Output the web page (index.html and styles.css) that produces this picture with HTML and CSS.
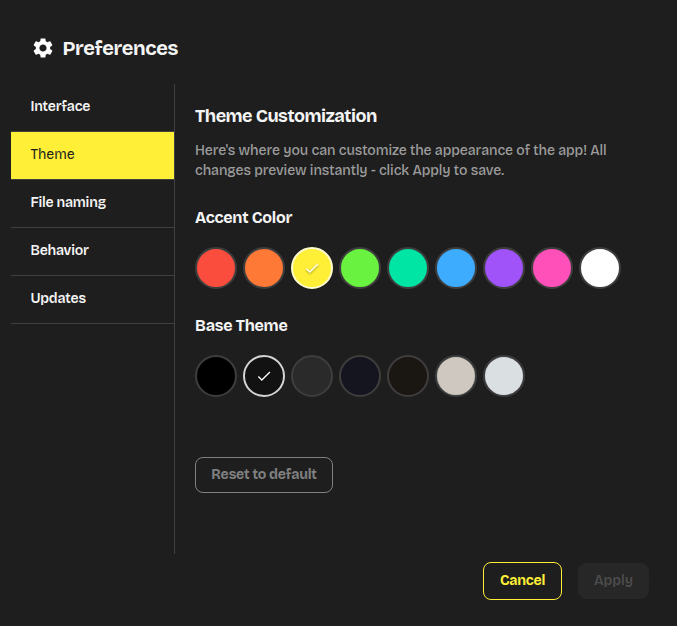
FILE: index.html
```html
<!DOCTYPE html>
<html lang="en">
<head>
<meta charset="utf-8">
<title>Preferences</title>
<link rel="stylesheet" href="styles.css">
</head>
<body>
<main class="dialog">
  <header class="header">
    <svg class="gear" viewBox="0 0 24 24"><path fill="currentColor" d="M19.14 12.94c.04-.3.06-.61.06-.94 0-.32-.02-.64-.07-.94l2.03-1.58c.18-.14.23-.41.12-.61l-1.92-3.32c-.12-.22-.37-.29-.59-.22l-2.39.96c-.5-.38-1.03-.7-1.62-.94l-.36-2.54c-.04-.24-.24-.41-.48-.41h-3.84c-.24 0-.43.17-.47.41l-.36 2.54c-.59.24-1.13.57-1.62.94l-2.39-.96c-.22-.08-.47 0-.59.22L2.74 8.87c-.12.21-.08.47.12.61l2.03 1.58c-.05.3-.09.63-.09.94s.02.64.07.94l-2.03 1.58c-.18.14-.23.41-.12.61l1.92 3.32c.12.22.37.29.59.22l2.39-.96c.5.38 1.03.7 1.62.94l.36 2.54c.05.24.24.41.48.41h3.84c.24 0 .44-.17.47-.41l.36-2.54c.59-.24 1.13-.56 1.62-.94l2.39.96c.22.08.47 0 .59-.22l1.92-3.32c.12-.22.07-.47-.12-.61l-2.01-1.58zM12 15.6c-1.98 0-3.6-1.62-3.6-3.6s1.62-3.6 3.6-3.6 3.6 1.62 3.6 3.6-1.62 3.6-3.6 3.6z"/></svg>
    <h1 class="title">Preferences</h1>
  </header>
  <div class="body">
    <nav class="nav">
      <a class="tab">Interface</a>
      <a class="tab active">Theme</a>
      <a class="tab">File naming</a>
      <a class="tab">Behavior</a>
      <a class="tab">Updates</a>
    </nav>
    <section class="panel">
      <h2 class="heading">Theme Customization</h2>
      <p class="intro">Here's where you can customize the appearance of the app! All<br>changes preview instantly - click Apply to save.</p>
      <h3 class="label accent-label">Accent Color</h3>
      <div class="swatches">
        <i class="swatch red"></i><i class="swatch orange"></i>
        <i class="swatch yellow"><svg class="check" viewBox="0 0 24 24"><path d="M4.5 12.8l4.6 4.5L20 6.8"/></svg></i>
        <i class="swatch green"></i><i class="swatch teal"></i><i class="swatch blue"></i><i class="swatch purple"></i><i class="swatch pink"></i><i class="swatch white"></i>
      </div>
      <h3 class="label base-label">Base Theme</h3>
      <div class="swatches">
        <i class="swatch black"></i>
        <i class="swatch dark"><svg class="check" viewBox="0 0 24 24"><path d="M4.5 12.8l4.6 4.5L20 6.8"/></svg></i>
        <i class="swatch gray"></i><i class="swatch navy"></i><i class="swatch brown"></i><i class="swatch sand"></i><i class="swatch silver"></i>
      </div>
      <button class="btn reset">Reset to default</button>
    </section>
  </div>
  <footer class="footer">
    <button class="btn cancel">Cancel</button>
    <button class="btn apply">Apply</button>
  </footer>
</main>
</body>
</html>
```
FILE: styles.css
```css
* { box-sizing: border-box; }
body {
  margin: 0;
  background: #1e1e1e;
  color: #f4f4f4;
  font-family: "Bricolage Grotesque", Inter, "Liberation Sans", sans-serif;
  font-size: 14px;
}
.dialog { height: 626px; overflow: hidden; display: flex; flex-direction: column; }
h1, h2, h3, p { margin: 0; white-space: nowrap; }
.header { display: flex; align-items: center; gap: 7.5px; height: 84px; padding: 12px 0 0 31px; }
.gear { width: 24px; height: 24px; color: #fff; }
.title { font-size: 20px; font-weight: 700; line-height: 24px; letter-spacing: -0.35px; }
.body { display: flex; height: 470px; padding-left: 11px; }
.nav { width: 164px; border-right: 1px solid #404040; }
.tab {
  display: flex; align-items: center; height: 48px; padding: 0 0 2px 19.4px;
  border-bottom: 1px solid #404040; font-weight: 600; letter-spacing: -0.2px;
}
.active { background: #ffef36; color: #1e1e1e; font-weight: 400; letter-spacing: 0; }
.panel { padding: 20px 0 0 20px; }
.heading { font-size: 18px; font-weight: 700; line-height: 24px; letter-spacing: -0.5px; }
.intro { margin-top: 13px; font-size: 14px; font-weight: 500; line-height: 20px; letter-spacing: -0.09px; color: #9c9c9c; }
.label { font-size: 16px; font-weight: 700; line-height: 20px; letter-spacing: -0.25px; }
.accent-label { margin-top: 27px; }
.base-label { margin-top: 27px; }
.swatches { display: flex; gap: 6px; margin-top: 19px; }
.swatch {
  display: flex; align-items: center; justify-content: center;
  width: 42px; height: 42px; border: 2px solid #3e3e3e; border-radius: 50%;
}
.check {
  width: 18px; height: 18px; fill: none; stroke: #fff; stroke-width: 1.8;
  filter: drop-shadow(0 1px 1px rgba(0, 0, 0, .4));
}
.red { background: #fb4d3d; }
.orange { background: #ff7936; }
.yellow { background: #ffef36; border-color: #fffbd0; }
.green { background: #69f23f; }
.teal { background: #00e5a3; }
.blue { background: #3dacff; }
.purple { background: #9f53f8; }
.pink { background: #ff4fb8; }
.white { background: #fff; }
.black { background: #000; }
.dark { background: #121212; border-color: #d4d4d4; }
.gray { background: #2a2a2a; }
.navy { background: #14151e; }
.brown { background: #1a1712; }
.sand { background: #cfc8c1; }
.silver { background: #dadfe2; }
.btn {
  display: flex; align-items: center; justify-content: center;
  padding: 0 0 1px; border: 1px solid; border-radius: 8px; background: none;
  font: 700 14px "Bricolage Grotesque", Inter, "Liberation Sans", sans-serif; white-space: nowrap; letter-spacing: -0.2px;
}
.reset { width: 138px; height: 36px; margin-top: 60px; color: #808080; }
.footer { display: flex; align-items: center; justify-content: flex-end; gap: 16px; height: 38px; margin-top: 8px; padding-right: 28px; }
.cancel { width: 79px; height: 38px; color: #ffef36; }
.apply { width: 71px; height: 36px; color: #4c4c4c; background: #272727; border-color: #272727; font-weight: 600; letter-spacing: 0; }
```
